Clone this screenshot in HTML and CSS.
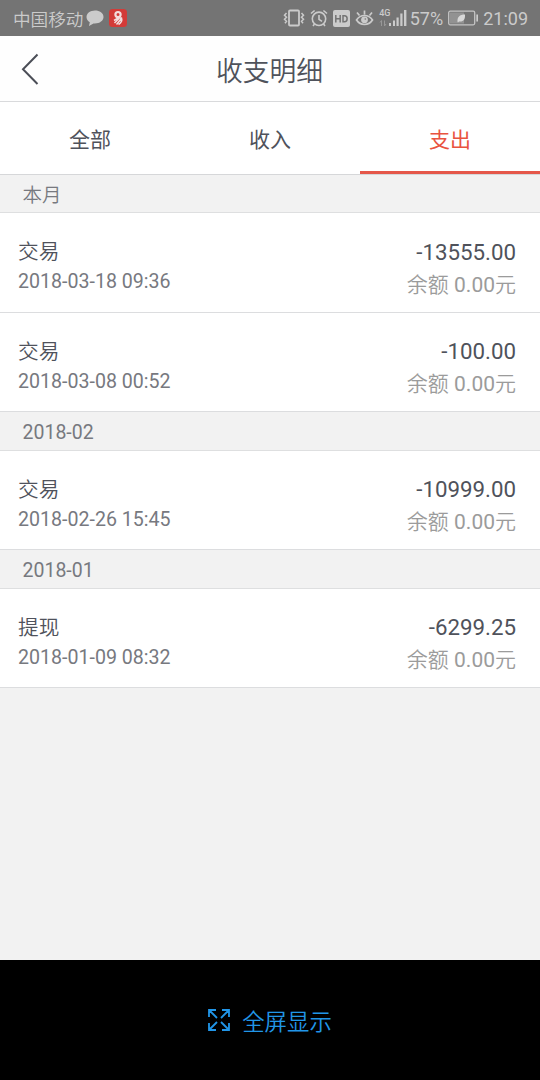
FILE: index.html
```html
<!DOCTYPE html>
<html lang="zh-CN">
<head>
    <meta charset="UTF-8">
    <meta name="viewport" content="width=device-width, initial-scale=1.0">
    <title>收支明细</title>
    <link rel="stylesheet" href="styles.css">
</head>
<body>
    <div class="status-bar">
        <span class="carrier">中国移动</span>
        <svg class="icon-chat" width="18" height="18" viewBox="0 0 18 18">
            <path d="M9 1.500C4.300 1.500.5 4.300.5 8c0 2.200 1.300 4 3.300 5.200L3 17l4.500-2.600C13 15 17.500 12 17.500 8S13.700 1.500 9 1.500z" fill="#cbcbcb"/>
        </svg>
        <svg class="icon-app" width="18" height="18" viewBox="0 0 18 18">
            <rect width="18" height="18" rx="3.500" fill="#d33b38"/>
            <circle cx="9" cy="5.600" r="2.600" fill="none" stroke="#f3dede" stroke-width="2.200"/>
            <path d="M5 11.500l4-2.500h3.500c1 3-.5 5-3 6.500M10 9.500l-4.500 4.500M12 10l-4.500 5.500" fill="none" stroke="#f3dede" stroke-width="1.500"/>
        </svg>
        <div class="status-right">
            <svg width="22" height="18" viewBox="0 0 22 18" fill="none" stroke="#cbcbcb">
                <rect x="6" y="1.500" width="10" height="15" rx="1" stroke-width="1.800"/>
                <path d="M3.500 4l-2 2.200 2 2-2 2 2 2-1.500 2M18.500 4l2 2.200-2 2 2 2-2 2 1.500 2" stroke-width="1.500"/>
            </svg>
            <svg class="icon-alarm" width="18" height="18" viewBox="0 0 18 18" fill="none" stroke="#cbcbcb" stroke-width="1.600">
                <circle cx="9" cy="9.800" r="6.700"/>
                <path d="M9 6v4.300l3 2M1 4.500L4.600 1.500M17 4.500l-3.600-3M4.500 15l-1.500 2M13.500 15l1.500 2"/>
            </svg>
            <svg class="icon-hd" width="17" height="17" viewBox="0 0 17 17">
                <rect width="17" height="17" rx="2" fill="#cbcbcb"/>
                <path d="M2.800 5v7.500M7.200 5v7.500M2.800 8.700h4.400M10 5.700v6h1.500c3.500 0 3.500-6 0-6z" fill="none" stroke="#747474" stroke-width="1.500"/>
            </svg>
            <svg class="icon-eye" width="19" height="18" viewBox="0 0 19 18" fill="none" stroke="#cbcbcb" stroke-width="1.700">
                <path d="M1.500 11c4-6 12-6 16 0-4 6-12 6-16 0zM9.500 5.500V1.500M4.500 6.500L2 3.500M14.500 6.500L17 3.500"/>
                <circle cx="9.500" cy="10.800" r="3.400" fill="#cbcbcb" stroke="none"/>
                <circle cx="10.300" cy="10" r=".8" fill="#747474" stroke="none"/>
            </svg>
            <div class="signal">
                <span class="network">4G</span>
                <svg width="28" height="18" viewBox="0 0 28 18">
                    <path d="M10 14h2v3h-2zM14 11.500h2V17h-2zM17.500 8.500h2.200V17h-2.200zM21.300 4.500h2.200V17h-2.200zM25 1h2.400v16H25z" fill="#cbcbcb"/>
                    <path d="M2.500 17v-5.500L1 13.500M5.500 11.500V17L7 15" fill="none" stroke="#989898" stroke-width="1"/>
                </svg>
            </div>
            <span class="percent">57%</span>
            <svg class="icon-battery" width="31" height="16" viewBox="0 0 31 16">
                <rect x=".700" y="1.200" width="26" height="13.600" rx="1.500" fill="none" stroke="#c4c4c4" stroke-width="1.300"/>
                <rect x="2" y="2.500" width="14" height="11" fill="#929292"/>
                <path d="M28.300 4.500h1.700v7h-1.700z" fill="#cbcbcb"/>
                <path d="M9.500 12c-.5-5 2-7.500 7.500-7.500.3 5-1.500 7.500-6 7l-1 1z" fill="#d8d8d8"/>
            </svg>
            <span class="clock">21:09</span>
        </div>
    </div>

    <div class="nav-bar">
        <svg class="back-btn" width="18" height="32" viewBox="0 0 18 32">
            <path d="M16.500 1.500L2 16.200 16.500 31" fill="none" stroke="#4b4e57" stroke-width="2"/>
        </svg>
        <div class="title">收支明细</div>
    </div>

    <div class="tabs">
        <div class="tab">全部</div>
        <div class="tab">收入</div>
        <div class="tab active">支出</div>
    </div>

    <div class="list">
        <div class="month month-cn">本月</div>
        <div class="record">
            <div class="info">
                <div class="name">交易</div>
                <div class="time">2018-03-18 09:36</div>
            </div>
            <div class="money">
                <div class="amount">-13555.00</div>
                <div class="balance"><span class="label">余额</span> 0.00<span class="label">元</span></div>
            </div>
        </div>
        <div class="record">
            <div class="info">
                <div class="name">交易</div>
                <div class="time">2018-03-08 00:52</div>
            </div>
            <div class="money">
                <div class="amount">-100.00</div>
                <div class="balance"><span class="label">余额</span> 0.00<span class="label">元</span></div>
            </div>
        </div>
        <div class="month">2018-02</div>
        <div class="record">
            <div class="info">
                <div class="name">交易</div>
                <div class="time">2018-02-26 15:45</div>
            </div>
            <div class="money">
                <div class="amount">-10999.00</div>
                <div class="balance"><span class="label">余额</span> 0.00<span class="label">元</span></div>
            </div>
        </div>
        <div class="month">2018-01</div>
        <div class="record">
            <div class="info">
                <div class="name">提现</div>
                <div class="time">2018-01-09 08:32</div>
            </div>
            <div class="money">
                <div class="amount">-6299.25</div>
                <div class="balance"><span class="label">余额</span> 0.00<span class="label">元</span></div>
            </div>
        </div>
    </div>

    <div class="bottom-bar">
        <svg width="22" height="22" viewBox="0 0 22 22" fill="none" stroke="#2196e8" stroke-width="1.800">
            <path d="M1 8V1h7M1 1l8 8M14 1h7v7M21 1l-8 8M1 14v7h7M1 21l8-8M21 14v7h-7M21 21l-8-8"/>
        </svg>
        <span>全屏显示</span>
    </div>
</body>
</html>
```
FILE: styles.css
```css
* {
    box-sizing: border-box;
}
body {
    margin: 0;
    height: 1080px;
    display: flex;
    flex-direction: column;
    font-family: Roboto, "Noto Sans CJK SC", sans-serif;
    background: #f2f2f2;
    color: #4f525b;
    overflow: hidden;
}
svg {
    display: block;
    flex-shrink: 0;
}
.status-bar {
    height: 36px;
    padding: 0 12px 0 13px;
    display: flex;
    align-items: center;
    background: #747474;
    color: #cbcbcb;
    font-size: 18px;
    white-space: nowrap;
}
.carrier {
    font-size: 17.6px;
    font-weight: 350;
}
.icon-chat {
    margin-left: 3px;
}
.icon-app {
    margin-left: 5px;
}
.status-right {
    margin-left: auto;
    display: flex;
    align-items: center;
}
.icon-alarm {
    margin-left: 5px;
}
.icon-hd {
    margin-left: 5px;
}
.icon-eye {
    margin-left: 5px;
}
.signal {
    margin-left: 5px;
    position: relative;
}
.network {
    position: absolute;
    top: 0;
    left: 0;
    font-size: 9px;
    line-height: 9px;
    font-weight: 500;
}
.percent {
    margin-left: 2.5px;
}
.icon-battery {
    margin-left: 5px;
}
.clock {
    margin-left: 4px;
}
.nav-bar {
    height: 66px;
    padding: 0 22px 0 21px;
    display: flex;
    align-items: center;
    background: #fefefe;
    border-bottom: 1px solid #d9dadc;
}
.title {
    flex: 1;
    padding: 2px 18px 0 0;
    text-align: center;
    font-size: 26.8px;
    font-weight: 350;
}
.tabs {
    height: 72.5px;
    display: flex;
    background: #fff;
    border-bottom: 1px solid #d6d7d9;
}
.tab {
    flex: 1;
    height: 72px;
    padding-top: 3px;
    display: flex;
    align-items: center;
    justify-content: center;
    font-size: 21px;
    border-bottom: 3px solid transparent;
}
.tab.active {
    color: #e9533f;
    border-bottom-color: #e5574a;
}
.list {
    flex: 1;
}
.month {
    height: 38.5px;
    padding-left: 22.5px;
    line-height: 41px;
    font-size: 19.5px;
    color: #77797f;
    border-bottom: 1px solid #dedfe0;
}
.month-cn {
    font-weight: 350;
    line-height: 42px;
}
.record {
    height: 99.5px;
    padding: 0 24px 0 18px;
    display: flex;
    justify-content: space-between;
    background: #fff;
    border-bottom: 1px solid #dcdddf;
}
.info {
    padding-top: 24px;
}
.name {
    font-size: 20.7px;
    line-height: 30px;
    font-weight: 350;
}
.time {
    font-size: 19.6px;
    line-height: 30px;
    color: #77797f;
}
.money {
    padding-top: 23.5px;
    text-align: right;
}
.amount {
    font-size: 22.3px;
    line-height: 30px;
}
.balance {
    font-size: 21px;
    line-height: 36.5px;
    color: #9b9b9b;
}
.label {
    font-weight: 350;
}
.bottom-bar {
    height: 120px;
    display: flex;
    align-items: center;
    justify-content: center;
    gap: 12px;
    background: #000;
    color: #2196e8;
    font-size: 22.4px;
    font-weight: 350;
}
```
